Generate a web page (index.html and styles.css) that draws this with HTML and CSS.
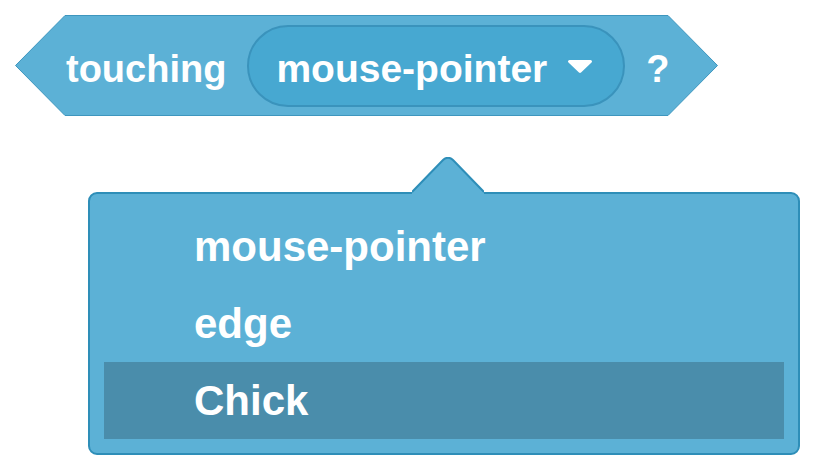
FILE: index.html
```html
<!DOCTYPE html>
<html>
<head>
<meta charset="utf-8">
<link rel="stylesheet" href="styles.css">
</head>
<body>
<div class="block">
  <svg class="block-shape" width="703" height="101" viewBox="0 0 703 101">
    <polygon points="50,0.5 653,0.5 702.5,50.5 653,100.5 50,100.5 0.5,50.5" fill="#5CB1D6" stroke="#3E96BE" stroke-width="1"/>
  </svg>
  <span class="label">touching</span>
  <div class="pill">
    <span class="pill-text">mouse-pointer</span>
    <svg class="caret" width="26" height="15" viewBox="0 0 26 15">
      <polygon points="2.5,2.5 23.5,2.5 13,12.5" fill="#fff" stroke="#fff" stroke-width="3" stroke-linejoin="round"/>
    </svg>
  </div>
  <span class="label q">?</span>
</div>
<div class="menu">
  <svg class="menu-arrow" width="72" height="37" viewBox="0 0 72 37">
    <path d="M0,35 L31,3 Q36,-1.5 41,3 L72,35 L72,37 L0,37 Z" fill="#5CB1D6"/>
    <path d="M0,35 L31,3 Q36,-1.5 41,3 L72,35" fill="none" stroke="#2E8EB8" stroke-width="2"/>
  </svg>
  <div class="item">mouse-pointer</div>
  <div class="item">edge</div>
  <div class="item active">Chick</div>
</div>
</body>
</html>
```
FILE: styles.css
```css
html, body {
  margin: 0;
  padding: 0;
  background: #ffffff;
}
body {
  font-family: "Liberation Sans", Arial, sans-serif;
  font-weight: bold;
  color: #ffffff;
  width: 816px;
  height: 470px;
  overflow: hidden;
}
.block {
  position: relative;
  margin: 15px 0 0 15px;
  width: 703px;
  height: 101px;
  display: flex;
  align-items: center;
  padding-left: 51px;
  box-sizing: border-box;
}
.block-shape {
  position: absolute;
  left: 0;
  top: 0;
  z-index: 0;
}
.label {
  position: relative;
  font-size: 38px;
  line-height: 1;
  margin-top: 6px;
}
.pill {
  position: relative;
  margin-left: 21px;
  height: 82px;
  box-sizing: border-box;
  border: 2px solid #3A93BC;
  border-radius: 41px;
  background: #47A8D1;
  display: flex;
  align-items: center;
  padding: 0 30px 0 27px;
  gap: 20px;
}
.pill-text {
  font-size: 39px;
  line-height: 1;
  margin-top: 6px;
}
.caret {
  display: block;
  margin-top: 2px;
}
.q {
  margin-left: 21px;
}
.menu {
  position: relative;
  margin: 76px 0 0 88px;
  width: 712px;
  height: 263px;
  box-sizing: border-box;
  border: 2px solid #2E8EB8;
  border-radius: 9px;
  background: #5CB1D6;
  padding: 14px 14px;
}
.menu-arrow {
  position: absolute;
  left: 322px;
  top: -37px;
  display: block;
}
.item {
  height: 77px;
  line-height: 77px;
  font-size: 42px;
  padding-left: 90px;
}
.item.active {
  background: #4A8DAB;
}
```
